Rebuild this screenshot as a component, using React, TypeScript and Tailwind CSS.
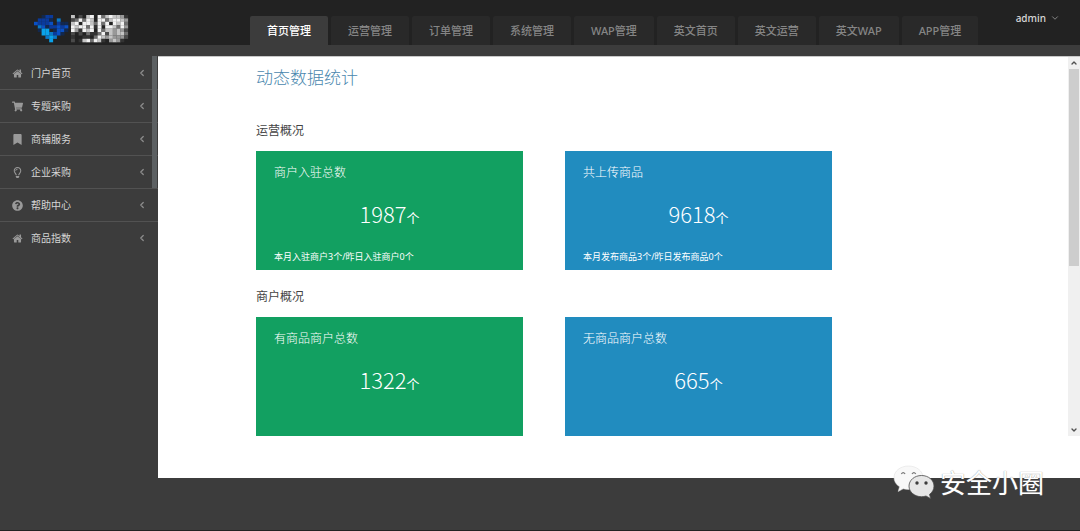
import { FaShoppingCart, FaBookmark, FaRegLightbulb, FaQuestionCircle } from "react-icons/fa";
import { ChevronDown, ChevronLeft, ChevronUp } from "lucide-react";

const LOGO_COLORS: Record<string, string> = {
  a: "#0a3a9c",
  b: "#0a50c4",
  c: "#0aa2ea",
  d: "#0a78c8",
  e: "#12284f",
  "0": "#333333",
  "1": "#4a4a4a",
  "2": "#707070",
  "3": "#989898",
  "4": "#c4c4c4",
  "5": "#f2f2f2",
};

const MARK = [
  "..eaa....",
  ".aaae.d..",
  "baaab.aee",
  ".dbeaabab",
  ".ecc.ebbe",
  "..ccdabe.",
  "...dcd...",
  "....c....",
];

const NAME = [
  "4.1.45.52454430",
  "125254.55245543",
  "45.5542525.5452",
  "54552505.554253",
  "530545.52443431",
  "1.1.20025143442",
  "0..00.254343331",
  "1.0452540.3430.",
];

function Mosaic({ rows, x }: { rows: string[]; x: number }) {
  return (
    <>
      {rows.flatMap((row, r) =>
        row.split("").map((c, i) =>
          c === "." ? null : (
            <rect key={`${r}-${i}`} x={x + i * 3.8} y={r * 3.4} width="3.9" height="3.5" fill={LOGO_COLORS[c]} />
          ),
        ),
      )}
    </>
  );
}

function HomeIcon({ className }: { className?: string }) {
  return (
    <svg className={className} viewBox="0 0 1664 1792" fill="currentColor" aria-hidden="true">
      <path d="M1408 992v480q0 26-19 45t-45 19h-384v-384h-256v384h-384q-26 0-45-19t-19-45v-480q0-1 .5-3t.5-3l575-474 575 474q1 2 1 6zm223-69l-62 74q-8 9-21 11h-3q-13 0-21-7l-692-577-692 577q-12 8-24 7-13-2-21-11l-62-74q-8-10-7-23.500t11-21.500l719-599q32-26 76-26t76 26l244 204v-195q0-14 9-23t23-9h192q14 0 23 9t9 23v408l219 182q10 8 11 21.500t-7 23.500z" />
    </svg>
  );
}

const TABS = ["首页管理", "运营管理", "订单管理", "系统管理", "WAP管理", "英文首页", "英文运营", "英文WAP", "APP管理"];

const MENU = [
  { label: "门户首页", icon: HomeIcon },
  { label: "专题采购", icon: FaShoppingCart },
  { label: "商铺服务", icon: FaBookmark },
  { label: "企业采购", icon: FaRegLightbulb },
  { label: "帮助中心", icon: FaQuestionCircle },
  { label: "商品指数", icon: HomeIcon },
];

const SECTIONS = [
  {
    title: "运营概况",
    cards: [
      { name: "商户入驻总数", value: 1987, note: "本月入驻商户3个/昨日入驻商户0个", color: "bg-[#12a061]" },
      { name: "共上传商品", value: 9618, note: "本月发布商品3个/昨日发布商品0个", color: "bg-[#218cbf]" },
    ],
  },
  {
    title: "商户概况",
    cards: [
      { name: "有商品商户总数", value: 1322, note: "", color: "bg-[#12a061]" },
      { name: "无商品商户总数", value: 665, note: "", color: "bg-[#218cbf]" },
    ],
  },
];

function Header() {
  return (
    <header className="flex h-[45px] bg-[#222222]">
      <a href="#" aria-label="首页" className="w-[250px] shrink-0 pt-[15px] pl-[34px]">
        <svg width="96" height="28" viewBox="0 0 96 28">
          <Mosaic rows={MARK} x={0} />
          <Mosaic rows={NAME} x={37} />
        </svg>
      </a>
      <nav className="flex items-end gap-[3px]">
        {TABS.map((tab, i) => (
          <a
            key={tab}
            href="#"
            className={
              i === 0
                ? "h-[29px] rounded-t-xs bg-[#3c3c3c] px-[17px] text-[11px] leading-[29px] font-medium whitespace-nowrap text-white"
                : "h-[29px] rounded-t-xs bg-[#292929] px-[17px] text-[11px] leading-[29px] font-medium whitespace-nowrap text-[#858585]"
            }
          >
            {tab}
          </a>
        ))}
      </nav>
      <button className="mr-5 ml-auto flex h-9 items-center gap-1 text-[10px] font-medium text-[#d8d8d8]">
        admin
        <ChevronDown className="size-[10px] text-[#999999]" />
      </button>
    </header>
  );
}

function Sidebar() {
  return (
    <aside className="relative w-[158px] shrink-0 pt-px">
      <ul>
        {MENU.map(({ label, icon: Icon }, i) => (
          <li key={label} className={i < MENU.length - 1 ? "border-b border-[#525252]" : ""}>
            <a href="#" className="flex h-8 items-center pr-[11px] pl-3 text-[10px] text-[#d6d6d6]">
              <Icon className="mr-2 size-[11px] text-[#999999]" />
              <span className="flex-1">{label}</span>
              <ChevronLeft className="size-[10px] text-[#8c8c8c]" strokeWidth={3} />
            </a>
          </li>
        ))}
      </ul>
      <div className="absolute top-0 right-px h-[132px] w-[5px] bg-[#5c6062]" />
    </aside>
  );
}

function Scrollbar() {
  return (
    <div className="flex w-3 shrink-0 flex-col items-center bg-[#f0f0f0] text-[#505050]">
      <ChevronUp className="h-3 w-2" strokeWidth={4} />
      <div className="h-[197px] w-[10px] bg-[#cdcdcd]" />
      <ChevronDown className="mt-auto h-3 w-2" strokeWidth={4} />
    </div>
  );
}

function Watermark() {
  return (
    <div className="absolute right-9 bottom-7 flex items-center gap-1">
      <svg width="43" height="36" viewBox="0 0 43 36">
        <path
          d="M15.500 1C7.500 1 1 6 1 12.500c0 4 2.100 7 5.500 9.200L5.200 26.500l5-2.700c1.700.5 3.500.7 5.300.7C23.500 24.500 30 19 30 12.500S23.500 1 15.500 1z"
          fill="#f8f8f8"
          stroke="#dcdcdc"
          strokeWidth="0.5"
        />
        <path d="M8.300 9q1.900-2.800 3.800 0M19 9q1.900-2.800 3.800 0" fill="none" stroke="#777777" strokeWidth="1.200" />
        <path
          d="M28.500 10.500c-7 0-12.500 4.700-12.500 10.600s5.500 10.600 12.500 10.600c1.600 0 3.100-.2 4.500-.7l4.800 2.700-1.300-4.300c2.800-2 4.500-4.900 4.500-8.300 0-5.900-5.500-10.600-12.500-10.600z"
          fill="#e6e6e6"
          stroke="#4a4a4a"
          strokeWidth="0.800"
        />
        <circle cx="24" cy="18" r="1.700" fill="#3c3c3c" />
        <circle cx="33" cy="18" r="1.700" fill="#3c3c3c" />
      </svg>
      <span className="text-[26px] leading-[38px] text-white [text-shadow:0_0_1px_#777777]">安全小圈</span>
    </div>
  );
}

export default function App() {
  return (
    <div className="relative flex min-h-screen flex-col border-b border-[#222222] bg-[#3c3c3c] font-['Noto_Sans','Noto_Sans_CJK_SC',sans-serif]">
      <Header />
      <div className="mt-[11px] flex">
        <Sidebar />
        <main className="flex-1 border-t border-[#c8c8c8] bg-white pb-[42px]">
          <div className="flex">
            <div className="flex-1 pl-[98px]">
              <h1 className="pt-2 text-[17px] leading-[26px] font-light text-[#4a87ae]">动态数据统计</h1>
              <div className="flex max-w-xl flex-col gap-[11px] pt-6">
                {SECTIONS.map((section) => (
                  <section key={section.title}>
                    <h2 className="pt-[7px] pb-[11px] text-xs leading-[18px] text-[#444444]">{section.title}</h2>
                    <div className="grid grid-cols-2 gap-[42px]">
                      {section.cards.map((card) => (
                        <article key={card.name} className={`${card.color} flex h-[119px] flex-col px-[18px] text-white`}>
                          <h3 className="pt-3 text-xs leading-5 font-light">{card.name}</h3>
                          <p className="mt-2.5 text-center leading-10 font-light">
                            <span className="font-['Noto_Sans_CJK_SC'] text-[22px]">{card.value}</span>
                            <span className="text-[13px] font-normal">个</span>
                          </p>
                          <p className="mt-auto pb-1 text-[9px] leading-[18px]">{card.note}</p>
                        </article>
                      ))}
                    </div>
                  </section>
                ))}
              </div>
            </div>
            <Scrollbar />
          </div>
        </main>
      </div>
      <Watermark />
    </div>
  );
}
